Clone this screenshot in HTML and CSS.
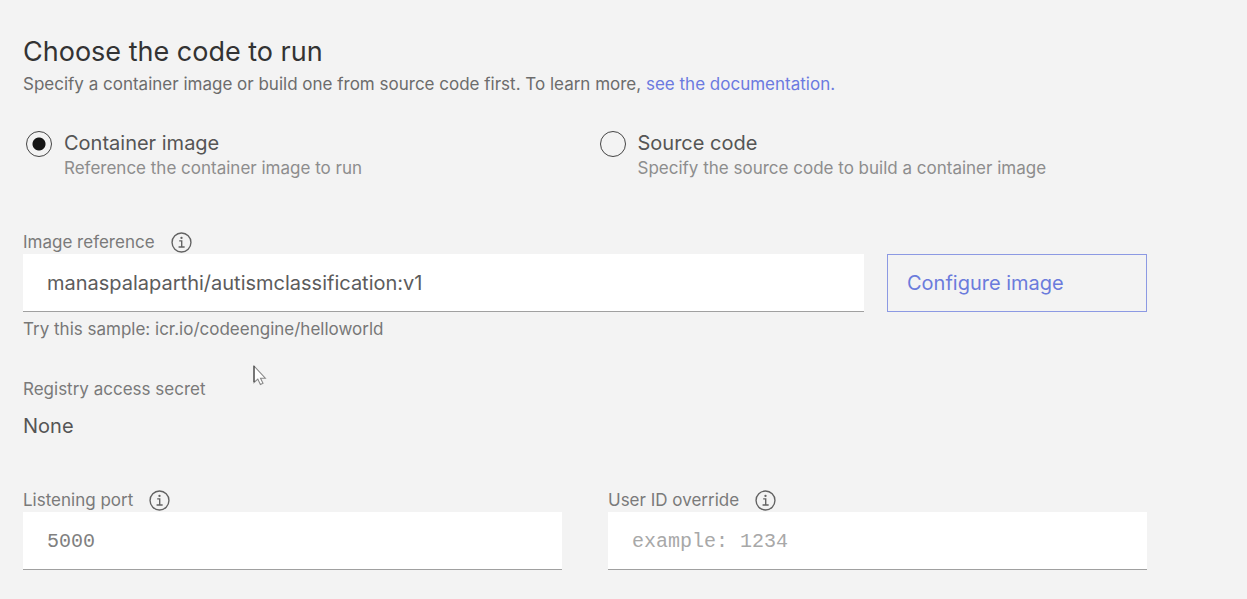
FILE: index.html
```html
<!DOCTYPE html>
<html lang="en">
<head>
<meta charset="utf-8">
<meta name="viewport" content="width=device-width, initial-scale=1">
<title>Choose the code to run</title>
<link rel="stylesheet" href="styles.css">
</head>
<body>
<svg class="symbols" aria-hidden="true">
  <symbol id="info" viewBox="0 0 20 20">
    <circle cx="10" cy="10" r="9" fill="none" stroke="currentColor" stroke-width="1.3"/>
    <path d="M7.8 8.4h2.4V14M7.2 14.3h5.8" fill="none" stroke="currentColor" stroke-width="1.3"/>
    <circle cx="10" cy="5.6" r="1.1" fill="currentColor"/>
  </symbol>
</svg>
<main class="page">
  <header class="intro">
    <h1 class="title">Choose the code to run</h1>
    <p class="lead">Specify a container image or build one from source code first. To learn more, <a class="link" href="#docs">see the documentation.</a></p>
  </header>
  <form class="form">
    <div class="options" role="radiogroup" aria-label="Code source">
      <label class="option">
        <input class="radio" type="radio" name="source" checked>
        <span class="option-text"><span class="option-title">Container image</span><span class="option-note">Reference the container image to run</span></span>
      </label>
      <label class="option">
        <input class="radio" type="radio" name="source">
        <span class="option-text"><span class="option-title">Source code</span><span class="option-note">Specify the source code to build a container image</span></span>
      </label>
    </div>
    <div class="image-field">
      <div class="label-row"><label for="image">Image reference</label><svg class="info"><use href="#info"/></svg></div>
      <div class="image-row">
        <input class="input" id="image" type="text" value="manaspalaparthi/autismclassification:v1" spellcheck="false">
        <button class="configure" type="button">Configure image</button>
      </div>
      <p class="helper">Try this sample: icr.io/codeengine/helloworld</p>
    </div>
    <dl class="secret">
      <dt class="secret-label">Registry access secret</dt>
      <dd class="secret-value">None</dd>
    </dl>
    <div class="pair">
      <div>
        <div class="label-row"><label for="port">Listening port</label><svg class="info"><use href="#info"/></svg></div>
        <input class="input mono" id="port" type="text" value="5000">
      </div>
      <div>
        <div class="label-row"><label for="uid">User ID override</label><svg class="info"><use href="#info"/></svg></div>
        <input class="input mono" id="uid" type="text" placeholder="example: 1234">
      </div>
    </div>
  </form>
</main>
<svg class="cursor" viewBox="0 0 14 22" aria-hidden="true"><path d="M1 1v16.5l3.8-3.4 2.6 5.4 2.6-1.2-2.5-5.1h4.8z" fill="#fff" stroke="#888" stroke-width="1.1"/><path d="M1 1v16" stroke="#333"/></svg>
</body>
</html>
```
FILE: styles.css
```css
* { box-sizing: border-box; }
body {
  margin: 0;
  background: #f3f3f3;
  color: #525252;
  font-family: Inter, "Noto Sans", sans-serif;
  font-size: 17px;
  line-height: 24px;
}
h1, p, dl, dd { margin: 0; }
.symbols { display: none; }
.page { padding: 32px 100px 28px 23px; }
.title { font-size: 27px; font-weight: 400; line-height: 40px; color: #333; }
.lead { color: #6c6c6c; }
.link { color: #6b7ae0; text-decoration: none; }
.options { display: grid; grid-template-columns: 1fr 1fr; gap: 23px; margin-top: 35px; }
.option { display: flex; align-items: flex-start; gap: 12px; padding-left: 3px; }
.radio {
  appearance: none;
  flex: none;
  width: 26px;
  height: 26px;
  margin: 0;
  border: 1px solid #444;
  border-radius: 50%;
}
.radio:checked { background: radial-gradient(circle, #161616 6px, transparent 7px); }
.option-text { display: flex; flex-direction: column; }
.option-title { font-size: 20px; line-height: 25px; color: #555; }
.option-note { line-height: 24px; color: #8d8d8d; }
.image-field { margin-top: 50px; }
.label-row { display: flex; align-items: center; gap: 16px; line-height: 24px; color: #7a7a7a; }
.info { width: 21px; height: 21px; color: #626262; }
.image-row { display: grid; grid-template-columns: 1fr 260px; gap: 23px; }
.input {
  display: block;
  width: 100%;
  height: 58px;
  padding: 0 24px;
  border: 0;
  border-bottom: 1px solid #a0a0a0;
  border-radius: 0;
  background: #fff;
  color: #5c5c5c;
  font: 20px Inter, "Noto Sans", sans-serif;
}
.mono { padding-top: 2px; color: #808080; font-family: "Liberation Mono", monospace; }
.input::placeholder { color: #a8a8a8; opacity: 1; }
.configure {
  padding: 0 19px;
  border: 1px solid #8c99e3;
  background: transparent;
  color: #6b7bdc;
  font: 20px Inter, "Noto Sans", sans-serif;
  text-align: left;
}
.helper { margin-top: 5px; color: #777; }
.secret { margin-top: 36px; color: #7a7a7a; }
.secret-value { margin-top: 13px; font-size: 20px; color: #555; }
.pair { display: grid; grid-template-columns: 1fr 1fr; gap: 46px; margin-top: 50px; }
.cursor { position: absolute; left: 253px; top: 365px; width: 14px; height: 22px; }
```
